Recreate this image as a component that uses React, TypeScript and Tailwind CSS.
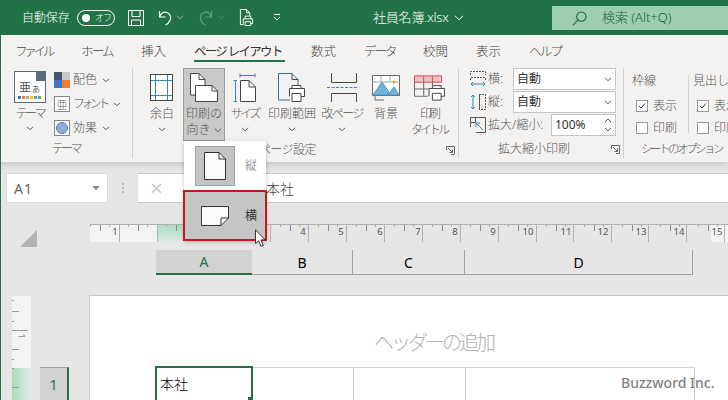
const Chevron = ({ className = "" }: { className?: string }) => (
  <svg viewBox="0 0 8 5" className={"w-[8px] h-[5px] " + className} fill="none" stroke="#555" strokeWidth="1">
    <path d="M1 0.8 4 3.8 7 0.8" />
  </svg>
);

function BigButton({
  label,
  width,
  ml,
  icon,
  active,
  noChevron,
  track = "",
}: {
  label: string[];
  width: string;
  ml: string;
  icon: React.ReactNode;
  active?: boolean;
  noChevron?: boolean;
  track?: string;
}) {
  return (
    <div
      className={
        "flex flex-col items-center h-[73px] shrink-0 pt-[4px] border " +
        width +
        " " +
        ml +
        (active ? " bg-[#c9c9c7] border-[#9c9c9c]" : " border-transparent")
      }
    >
      <div className="h-[30px] flex items-center justify-center">{icon}</div>
      <div className={"mt-[3px] text-[12px] leading-[16px] text-center whitespace-nowrap text-[#555] font-light " + track}>
        {label.map((l, i) => (
          <div key={i} className="flex items-center justify-center gap-[3px]">
            {l}
            {active && i === 1 && <Chevron />}
          </div>
        ))}
      </div>
      {!active && !noChevron && <Chevron className="mt-[5px]" />}
    </div>
  );
}

function GroupLabel({ text, launcher, className = "" }: { text: string; launcher?: boolean; className?: string }) {
  return (
    <div className={"h-[18px] flex items-center justify-center text-[12px] text-[#555] font-light relative " + className}>
      {text}
      {launcher && (
        <svg viewBox="0 0 9 9" className="w-[9px] h-[9px] absolute right-[3px] top-[5px]" fill="none" stroke="#666">
          <path d="M.5 4V.5H8.500V8.500H5M2 2 6.500 6.500M6.500 3.500V6.500H3.500" />
        </svg>
      )}
    </div>
  );
}

function Ruler() {
  const nums = [
    [115, "1"],
    [303, "4"],
    [341, "5"],
    [380, "6"],
    [418, "7"],
    [455, "8"],
    [493, "9"],
    [528, "10"],
    [566, "11"],
    [603, "12"],
    [641, "13"],
    [679, "14"],
    [717, "15"],
  ] as [number, string][];
  const long = [119, 157, 270, 308, 346, 384, 422, 460, 498, 536, 573, 611, 648, 686, 724];
  const short: number[] = [];
  const dots: number[] = [];
  for (let i = 0; i < 17; i++) {
    short.push(100 + i * 38);
    dots.push(90 + i * 38, 109 + i * 38);
  }
  return (
    <svg viewBox="90 224 638 18" className="w-[638px] h-[18px]">
      <rect x="90" y="224" width="67" height="18" fill="#f3f3f3" />
      <defs>
        <linearGradient id="rg" x1="0" y1="0" x2="0" y2="1">
          <stop offset="0" stopColor="#a9dcbd" />
          <stop offset="1" stopColor="#dfe9e3" />
        </linearGradient>
      </defs>
      <rect x="157" y="224" width="27" height="18" fill="url(#rg)" />
      <rect x="711" y="224" width="17" height="18" fill="#f3f3f3" />
      <line x1="90" y1="224.500" x2="728" y2="224.500" stroke="#b0b0b0" />
      {long.map((x) => (
        <line key={x} x1={x + 0.5} y1="225" x2={x + 0.5} y2="242" stroke="#b0b0b0" />
      ))}
      {short.map((x) => (
        <line key={x} x1={x + 0.5} y1="225" x2={x + 0.5} y2="231" stroke="#8a8a8a" />
      ))}
      {dots.map((x) => (
        <line key={x} x1={x + 0.5} y1="225" x2={x + 0.5} y2="226.500" stroke="#999" />
      ))}
      {nums.map(([x, t]) => (
        <text key={t} x={x} y="235" fontSize="9.500" textAnchor="middle" fill="#555" fontFamily="Noto Sans">
          {t}
        </text>
      ))}
    </svg>
  );
}

export default function App() {
  return (
    <div
      className="relative w-[728px] h-[400px] overflow-hidden bg-[#e6e6e6] text-[#444]"
      style={{ fontFamily: '"Noto Sans", "Noto Sans CJK JP", sans-serif' }}
    >
      {/* title bar */}
      <div className="h-[35px] bg-[#217346] flex items-center text-white relative">
        <span className="ml-[22px] text-[12px] w-[50px] whitespace-nowrap font-light tracking-[-0.1px]">自動保存</span>
        <div className="ml-[5px] w-[38px] h-[16px] rounded-full border border-white flex items-center pl-[4px] gap-[5px]">
          <div className="w-[8px] h-[8px] rounded-full bg-white" />
          <span className="text-[9px] leading-none font-light tracking-[-1px]">オフ</span>
        </div>
        <svg viewBox="0 0 16 16" className="ml-[13px] w-[16px] h-[16px]" fill="none" stroke="#fff">
          <path d="M.5.5H15.500V15.500H.5ZM4 .5V6.500H12V.500M3.500 15.500V10H12.500V15.500" />
        </svg>
        <svg viewBox="0 0 16 16" className="ml-[13px] w-[16px] h-[16px]" fill="none" stroke="#fff" strokeWidth="1.200">
          <path d="M2.500 1V7H8.500M2.500 7C4 3.500 7 1.500 10 2.500c3.500 1.200 4.500 5 3 8-1 2-2.500 3.500-4.500 4.500" />
        </svg>
        <Chevron className="ml-[3px] invert" />
        <svg viewBox="0 0 16 16" className="ml-[14px] w-[16px] h-[16px] opacity-30" fill="none" stroke="#fff" strokeWidth="1.200">
          <path d="M13.500 1V7H7.500M13.500 7C12 3.500 9 1.500 6 2.500c-3.500 1.200-4.500 5-3 8 1 2 2.500 3.500 4.500 4.500" />
        </svg>
        <Chevron className="ml-[3px] invert opacity-30" />
        <svg viewBox="0 0 16 18" className="ml-[14px] w-[15px] h-[17px]" fill="none" stroke="#fff">
          <path d="M5 16.500H1.500V.5H8L11.500 4V7M8 .5V4H11.500M6.500 10.500V7.500H12.500V10.500M4.500 15.500V10.500H14.500V15.500H12.500M6.500 13.500H12.500V17.500H6.500Z" />
        </svg>
        <svg viewBox="0 0 8 7" className="ml-[19px] w-[8px] h-[7px]" fill="none" stroke="#fff">
          <path d="M1 .5H7M1 3 4 6 7 3" />
        </svg>
        <span className="ml-[92px] text-[13px] whitespace-nowrap font-light tracking-[-0.2px]">社員名簿.xlsx</span>
        <svg viewBox="0 0 10 6" className="ml-[5px] w-[10px] h-[6px]" fill="none" stroke="#fff">
          <path d="M1 .8 5 4.800 9 .8" />
        </svg>
        <div className="absolute left-[552px] right-0 top-[6px] h-[24px] bg-[#9dceae] flex items-center text-[#1f5f3c]">
          <svg viewBox="0 0 16 16" className="ml-[20px] w-[15px] h-[15px]" fill="none" stroke="#1f5f3c" strokeWidth="1.100">
            <circle cx="10" cy="6" r="5" />
            <path d="M6.500 9.500 1 15" />
          </svg>
          <span className="ml-[15px] text-[13px] whitespace-nowrap font-light">検索 (Alt+Q)</span>
        </div>
      </div>

      {/* tabs */}
      <div className="h-[33px] bg-[#f3f2f1] flex text-[12.500px] font-light whitespace-nowrap pt-[8px] leading-[17px]">
        <span className="ml-[15px] w-[37px] tracking-[-3.200px]">ファイル</span>
        <span className="ml-[29px] w-[32px] tracking-[-1.800px]">ホーム</span>
        <span className="ml-[28px] w-[26px]">挿入</span>
        <div className="ml-[27px] w-[91px] h-[19px] border-b-2 border-[#217346] font-normal text-[#333] tracking-[-1.700px]">ページ レイアウト</div>
        <span className="ml-[26px] w-[26px]">数式</span>
        <span className="ml-[27px] w-[31px] tracking-[-2px]">データ</span>
        <span className="ml-[28px] w-[26px]">校閲</span>
        <span className="ml-[27px] w-[26px]">表示</span>
        <span className="ml-[27px] w-[32px] tracking-[-1.800px]">ヘルプ</span>
      </div>

      {/* ribbon */}
      <div className="h-[94px] bg-[#f3f2f1] flex shadow-[0_3px_5px_rgba(0,0,0,0.12)] relative">
        {/* theme */}
        <div className="w-[133px] shrink-0 flex flex-col border-r border-[#d0d0d0] mb-[4px]">
          <div className="flex-1 flex">
            <div className="ml-[14px] w-[32px] shrink-0 flex flex-col items-center pt-[3px]">
              <svg viewBox="0 0 32 32" className="w-[32px] h-[32px]">
                <rect x=".5" y=".5" width="31" height="31" fill="#fff" stroke="#5b6b7d" />
                <path d="M22 1H31V10H22Z" fill="#5b6b7d" />
                <rect x="4" y="25" width="3" height="3" fill="#4472c4" />
                <rect x="8" y="25" width="3" height="3" fill="#ed7d31" />
                <rect x="12" y="25" width="3" height="3" fill="#a5a5a5" />
                <rect x="16" y="25" width="3" height="3" fill="#ffc000" />
                <rect x="20" y="25" width="3" height="3" fill="#5b9bd5" />
                <rect x="24" y="25" width="3" height="3" fill="#70ad47" />
                <text x="5" y="21" fontSize="12" fill="#555" fontFamily="Noto Sans CJK JP">亜</text>
                <text x="18" y="21" fontSize="8" fill="#555" fontFamily="Noto Sans CJK JP">あ</text>
              </svg>
              <span className="mt-[3px] text-[12px] leading-[15px] whitespace-nowrap font-light text-[#555] tracking-[-2.500px]">テーマ</span>
              <Chevron className="mt-[5px]" />
            </div>
            <div className="ml-[8px] flex flex-col pt-[4px] gap-[8px] text-[12px] font-light text-[#555]">
              <div className="h-[16px] flex items-center gap-[3px] whitespace-nowrap">
                <svg viewBox="0 0 16 16" className="w-[16px] h-[16px]">
                  <rect width="8" height="8" fill="#44546a" />
                  <rect x="8" width="8" height="8" fill="#c8c8c8" />
                  <rect y="8" width="8" height="8" fill="#4472c4" />
                  <rect x="8" y="8" width="8" height="8" fill="#ed7d31" />
                </svg>
                配色
                <Chevron className="ml-[2px]" />
              </div>
              <div className="h-[16px] flex items-center gap-[3px] whitespace-nowrap">
                <svg viewBox="0 0 16 16" className="w-[16px] h-[16px]">
                  <rect x=".5" y=".5" width="15" height="15" fill="#fff" stroke="#888" />
                  <text x="2.500" y="12.500" fontSize="11" fill="#666" fontFamily="Noto Sans CJK JP">亜</text>
                </svg>
                <span className="tracking-[-3.600px] mr-[3px]">フォント</span>
                <Chevron />
              </div>
              <div className="h-[16px] flex items-center gap-[3px] whitespace-nowrap">
                <svg viewBox="0 0 16 16" className="w-[16px] h-[16px]">
                  <rect x=".5" y=".5" width="15" height="15" fill="#fff" stroke="#888" />
                  <circle cx="8" cy="8" r="5.500" fill="#8faadc" stroke="#5b7dbb" />
                </svg>
                効果
                <Chevron className="ml-[2px]" />
              </div>
            </div>
          </div>
          <GroupLabel text="テーマ" className="tracking-[-2.500px]" />
        </div>

        {/* page setup */}
        <div className="w-[326px] shrink-0 flex flex-col border-r border-[#d0d0d0] mb-[4px]">
          <div className="flex-1 flex">
            <BigButton
              label={["余白"]}
              width="w-[30px]"
              ml="ml-[14px]"
              icon={
                <svg viewBox="0 0 24 28" className="w-[24px] h-[28px]" fill="#fff" stroke="#444">
                  <rect x=".5" y=".5" width="22" height="26" />
                  <path d="M1 6.500H22M1 21.500H22M5.500 1V26M17.500 1V26" fill="none" stroke="#2f8fb0" />
                </svg>
              }
            />
            <BigButton
              label={["印刷の", "向き"]}
              width="w-[42px]"
              ml="ml-[6px]"
              active
              icon={
                <svg viewBox="0 0 30 30" className="w-[30px] h-[30px]" fill="#fff" stroke="#444">
                  <path d="M1.500 .5H10L16 6.500V22H1.500Z" />
                  <path d="M10 .5V6.500H16" fill="none" />
                  <path d="M6.500 12.500H23L28.500 18V28.500H6.500Z" />
                  <path d="M23 12.500V18H28.500" fill="none" />
                </svg>
              }
            />
            <BigButton
              label={["サイズ"]}
              width="w-[32px]"
              ml="ml-[4px]"
              track="tracking-[-2.400px]"
              icon={
                <svg viewBox="0 0 24 30" className="w-[24px] h-[30px]" fill="none" stroke="#444">
                  <path d="M7 2.500H22M.5 7.500H4M.5 28.500H4M2.500 8V28M7 .5V4.500M22 .5V4.500" stroke="#2f8fb0" />
                  <path d="M7.500 7.500H16L22.500 14V28.500H7.500Z" fill="#fff" />
                  <path d="M16 7.500V14H22.500" />
                </svg>
              }
            />
            <BigButton
              label={["印刷範囲"]}
              width="w-[50px]"
              ml="ml-[6px]"
              icon={
                <svg viewBox="0 0 28 30" className="w-[28px] h-[30px]" fill="none" stroke="#444">
                  <path d="M.5.5H14L20 6.500V12M.5.5V27H12" stroke="#2f6f9f" />
                  <path d="M14 .5V6.500H20" />
                  <path d="M14 15.500V12.500H23V15.500M11.500 23.500V15.500H26.500V23.500H23M14 20.500H23V28.500H14Z" fill="#fff" />
                </svg>
              }
            />
            <BigButton
              label={["改ページ"]}
              width="w-[42px]"
              ml="ml-[4px]"
              track="tracking-[-1.500px]"
              icon={
                <svg viewBox="0 0 30 30" className="w-[30px] h-[30px]" fill="none" stroke="#444">
                  <path d="M4.500 0V9.500H29.500V0M4.500 29V20.500H29.500V29" />
                  <path d="M0 14.500H30" stroke="#2f8fb0" strokeDasharray="3 1.500" />
                </svg>
              }
            />
            <BigButton
              label={["背景"]}
              width="w-[30px]"
              ml="ml-[8px]"
              noChevron
              icon={
                <svg viewBox="0 0 28 26" className="w-[28px] h-[26px]" fill="none" stroke="#666">
                  <path d="M.5.5H27.500V20.500H.5Z" fill="#fff" />
                  <path d="M.5 7H27.500M9 1V7M18 1V7" stroke="#aaa" />
                  <path d="M1 20 10 7 19 20Z" fill="#6fb5dc" stroke="#4d94bd" />
                  <path d="M16 20 22 12 27 20Z" fill="#6fb5dc" stroke="#4d94bd" />
                  <circle cx="22" cy="7" r="1.500" fill="#e49a3d" stroke="none" />
                  <path d="M3 21V25H12" />
                </svg>
              }
            />
            <BigButton
              label={["印刷", "タイトル"]}
              width="w-[40px]"
              ml="ml-[8px]"
              noChevron
              track="tracking-[-3px]"
              icon={
                <svg viewBox="0 0 32 26" className="w-[31px] h-[26px]" fill="none" stroke="#666">
                  <path d="M.5.5H28.500V7H.5Z" fill="#f3c1c1" stroke="#d4484d" />
                  <path d="M10 1V7M19 1V7" stroke="#d4484d" />
                  <path d="M.5 7V21.500H14M.5 14H15M10 7V21M19 7V10" />
                  <path d="M19 13.500V10.500H28V13.500M15.500 21.500V13.500H31.500V21.500H28M19 18.500H28V25.500H19Z" fill="#fff" stroke="#444" />
                </svg>
              }
            />
          </div>
          <GroupLabel text="ページ設定" launcher className="pr-[16px] tracking-[-0.500px]" />
        </div>

        {/* scale */}
        <div className="w-[165px] shrink-0 flex flex-col border-r border-[#d0d0d0] mb-[4px]">
          <div className="flex-1 flex flex-col gap-[1px] text-[12px] font-light text-[#555]">
            <div className="h-[22px] flex items-center">
              <svg viewBox="0 0 16 16" className="ml-[11px] w-[16px] h-[16px]" fill="none" stroke="#555">
                <path d="M.5 4V.5H15.500V4M.5 9V6.500H15.500V9" strokeDasharray="2 1" />
                <path d="M1 13H15M3 11 1 13 3 15M13 11 15 13 13 15" stroke="#2f8fb0" />
              </svg>
              <span className="ml-[2px] w-[25px]">横:</span>
              <div className="w-[103px] h-[22px] bg-white border border-[#c6c6c6] flex items-center justify-between pl-[3px] pr-[3px] text-[#333] font-normal">
                自動
                <Chevron />
              </div>
            </div>
            <div className="h-[22px] flex items-center">
              <svg viewBox="0 0 16 16" className="ml-[11px] w-[16px] h-[16px]" fill="none" stroke="#555">
                <path d="M9 .5H15.500V15.500H9" strokeDasharray="2 1" />
                <path d="M9.500 1V15" />
                <path d="M3 1V15M1 3 3 1 5 3M1 13 3 15 5 13" stroke="#2f8fb0" />
              </svg>
              <span className="ml-[2px] w-[25px]">縦:</span>
              <div className="w-[103px] h-[22px] bg-white border border-[#c6c6c6] flex items-center justify-between pl-[3px] pr-[3px] text-[#333] font-normal">
                自動
                <Chevron />
              </div>
            </div>
            <div className="h-[22px] flex items-center">
              <svg viewBox="0 0 16 16" className="ml-[11px] w-[16px] h-[16px]" fill="none" stroke="#555">
                <path d="M.5 10V.5H15.500V15.500H6" />
                <path d="M.5 5.500H5.500V.5" />
                <path d="M6 6 13 13M6 10V6H10" stroke="#2f8fb0" />
              </svg>
              <span className="ml-[2px] w-[63px] whitespace-nowrap">拡大/縮小:</span>
              <div className="w-[65px] h-[22px] bg-white border border-[#c6c6c6] flex items-center justify-between pl-[3px] pr-[3px] font-normal text-[#333]">
                100%
                <svg viewBox="0 0 8 14" className="w-[8px] h-[14px]" fill="none" stroke="#555">
                  <path d="M1 4 4 1 7 4M1 10 4 13 7 10" />
                </svg>
              </div>
            </div>
          </div>
          <GroupLabel text="拡大縮小印刷" launcher className="pr-[14px]" />
        </div>

        {/* sheet options */}
        <div className="flex-1 min-w-0 flex flex-col mb-[4px] overflow-hidden">
          <div className="flex-1 flex text-[12px] font-light text-[#555] pt-[5px] whitespace-nowrap">
            <div className="ml-[8px] w-[56px] shrink-0 flex flex-col">
              <span className="leading-[16px]">枠線</span>
              <div className="mt-[6px] ml-[4px] flex items-center gap-[5px] h-[22px]">
                <div className="w-[12px] h-[12px] bg-white border border-[#999] flex items-center justify-center">
                  <svg viewBox="0 0 8 8" className="w-[8px] h-[8px]" fill="none" stroke="#333"><path d="M1 4 3 6 7 1.500" /></svg>
                </div>
                表示
              </div>
              <div className="ml-[4px] flex items-center gap-[5px] h-[22px]">
                <div className="w-[12px] h-[12px] bg-white border border-[#999]" />
                印刷
              </div>
            </div>
            <div className="w-[1px] h-[58px] mt-[2px] bg-[#d0d0d0] shrink-0" />
            <div className="ml-[4px] shrink-0 flex flex-col">
              <span className="leading-[16px]">見出し</span>
              <div className="mt-[6px] ml-[4px] flex items-center gap-[5px] h-[22px]">
                <div className="w-[12px] h-[12px] bg-white border border-[#999] flex items-center justify-center">
                  <svg viewBox="0 0 8 8" className="w-[8px] h-[8px]" fill="none" stroke="#333"><path d="M1 4 3 6 7 1.500" /></svg>
                </div>
                表示
              </div>
              <div className="ml-[4px] flex items-center gap-[5px] h-[22px]">
                <div className="w-[12px] h-[12px] bg-white border border-[#999]" />
                印刷
              </div>
            </div>
          </div>
          <div className="h-[18px] pl-[17px] flex items-center text-[11.500px] font-light text-[#555] whitespace-nowrap tracking-[-2.500px]">シートのオプション</div>
        </div>
      </div>

      {/* name box + formula bar */}
      <div className="mt-[11px] h-[30px] flex items-center">
        <div className="ml-[6px] w-[102px] h-[30px] bg-white border border-[#dcdcdc] flex items-center justify-between pl-[7px] pr-[7px] text-[14px] text-[#666] tracking-[1px]">
          A1
          <div className="w-0 h-0 border-x-[4px] border-x-transparent border-t-[4px] border-t-[#888]" />
        </div>
        <div className="ml-[14px] w-[3px] flex flex-col gap-[2px]">
          <div className="w-[2px] h-[2px] bg-[#bbb]" />
          <div className="w-[2px] h-[2px] bg-[#bbb]" />
          <div className="w-[2px] h-[2px] bg-[#bbb]" />
        </div>
        <div className="ml-[13px] flex-1 h-[30px] bg-white border-y border-[#c8c8c8] flex items-center">
          <svg viewBox="0 0 12 12" className="ml-[13px] w-[11px] h-[11px]" fill="none" stroke="#c4c4c4" strokeWidth="1.500">
            <path d="M1 1 11 11M11 1 1 11" />
          </svg>
          <span className="ml-[104px] text-[14px] font-light text-[#444]">本社</span>
        </div>
      </div>

      {/* ruler */}
      <div className="mt-[21px] h-[18px] flex">
        <svg viewBox="0 0 17 17" className="ml-[20px] mt-[6px] w-[17px] h-[17px] shrink-0 overflow-visible">
          <path d="M17 0V17H0Z" fill="#b3b3b3" />
        </svg>
        <div className="ml-[53px]">
          <Ruler />
        </div>
      </div>

      {/* column headers */}
      <div className="mt-[8px] h-[25px] ml-[156px] flex text-[14px] text-black">
        <div className="w-[96px] bg-[#d2d2d2] border-b-2 border-[#217346] text-[#217346] flex items-center justify-center">A</div>
        <div className="w-[101px] border-r border-b border-[#a0a0a0] flex items-center justify-center">B</div>
        <div className="w-[112px] border-r border-b border-[#a0a0a0] flex items-center justify-center">C</div>
        <div className="w-[228px] border-r border-b border-[#a0a0a0] flex items-center justify-center">D</div>
      </div>

      {/* page */}
      <div className="mt-[20px] h-[105px] flex">
        <svg viewBox="0 0 19 104" className="ml-[12px] mt-[1px] w-[19px] h-[104px] shrink-0">
          <defs>
            <linearGradient id="vg" x1="0" y1="0" x2="1" y2="0">
              <stop offset="0" stopColor="#a9dcbd" />
              <stop offset="1" stopColor="#e4ebe7" />
            </linearGradient>
          </defs>
          <rect width="19" height="72" fill="#f3f3f3" />
          <rect y="72" width="19" height="32" fill="url(#vg)" />
          <path d="M0 4.500H2M0 15.500H7M0 25.500H2M0 34.500H16M0 53.500H7M0 63.500H2M0 72.500H2M0 91.500H7" stroke="#999" />
          <text x="0" y="0" fontSize="8" fill="#666" transform="translate(6 40) rotate(90)" textAnchor="middle" fontFamily="Noto Sans">1</text>
        </svg>
        <div className="ml-[9px] w-[29px] mt-[72px] h-[33px] bg-[#d2d2d2] border-t border-[#a0a0a0] border-r-2 border-r-[#217346] flex items-center justify-center text-[14px] text-[#217346] shrink-0">
          1
        </div>
        <div className="ml-[20px] flex-1 bg-white border-t border-l border-[#c8c8c8] flex flex-col relative">
          <div className="h-[70px] pl-[284px] pt-[33px] text-[20px] leading-[28px] font-light text-[#b3b3b3] whitespace-nowrap tracking-[-3px]">
            ヘッダーの追加
          </div>
          <div className="flex-1 flex pl-[65px]">
            <div className="w-[98px] border-2 border-b-0 border-[#217346] relative pl-[3px] pt-[7px] text-[14px] leading-[18px] font-light text-black">
              本社
              <div className="absolute right-[-2px] bottom-0 w-[5px] h-[3px] bg-[#217346]" />
            </div>
            <div className="w-[101px] mt-[1px] border-t border-r border-[#d0d0d0]" />
            <div className="w-[112px] mt-[1px] border-t border-r border-[#d0d0d0]" />
            <div className="w-[229px] mt-[1px] border-t border-r border-[#d0d0d0]" />
          </div>
        </div>
      </div>

      {/* dropdown for page orientation */}
      <div className="absolute left-[184px] top-[141px] w-[82px] h-[100px] bg-white shadow-[0_1px_4px_rgba(0,0,0,0.25)] flex flex-col">
        <div className="h-[49px] flex items-center pl-[11px]">
          <div className="w-[40px] h-[40px] bg-[#c4c4c2] border border-[#a0a0a0] flex items-center justify-center">
            <svg viewBox="0 0 22 28" className="w-[22px] h-[28px]" fill="#fbfbfb" stroke="#333">
              <path d="M.5.5H15L21.500 7V27.500H.5Z" />
              <path d="M15 .5V7H21.500" fill="none" />
            </svg>
          </div>
          <span className="ml-[10px] text-[12px] font-light text-[#777]">縦</span>
        </div>
      </div>
      <div className="absolute left-[183px] top-[190px] w-[84px] h-[51px] bg-[#c5c5c5] border-2 border-[#c8161d] flex items-center pl-[16px]">
        <svg viewBox="0 0 28 20" className="w-[28px] h-[20px]" fill="#fbfbfb" stroke="#333">
          <path d="M.5.5H27.500V12L20 19.500H.5Z" />
          <path d="M27.500 12H20V19.500" fill="none" />
        </svg>
        <span className="ml-[16px] text-[12px] text-[#333]">横</span>
      </div>
      <svg viewBox="0 0 12 20" className="absolute left-[255px] top-[229px] w-[11px] h-[19px]">
        <path d="M.5.5V15.500L4 12.500 6.500 18.500 9 17.500 6.500 11.500H11Z" fill="#fff" stroke="#222" />
      </svg>

      {/* watermark */}
      <span className="absolute left-[621px] top-[374px] text-[14px] leading-[18px] font-medium text-[#808080] whitespace-nowrap">Buzzword Inc.</span>

      <div className="absolute left-0 top-[35px] bottom-0 w-[1px] bg-[#217346]" />
    </div>
  );
}
